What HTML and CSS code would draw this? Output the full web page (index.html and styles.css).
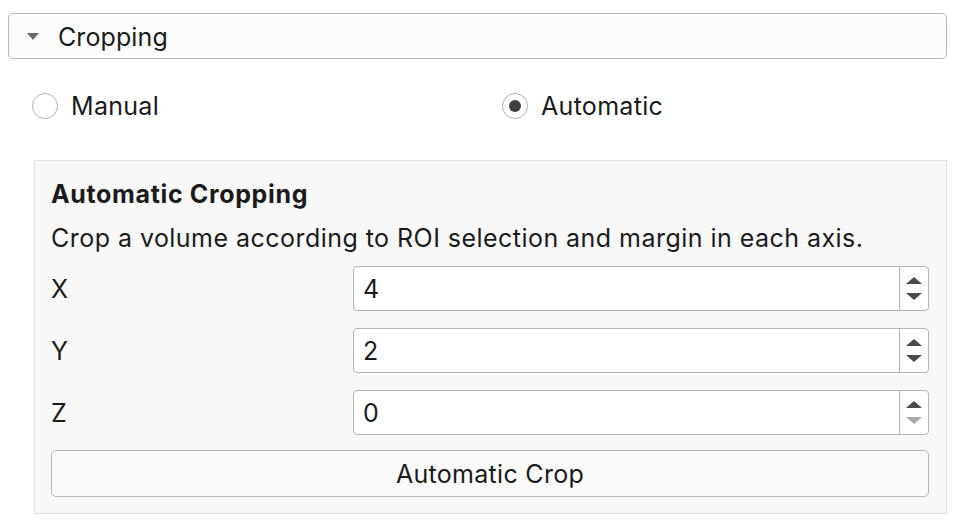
FILE: index.html
```html
<!DOCTYPE html>
<html>
<head>
<meta charset="utf-8">
<link rel="stylesheet" href="styles.css">
</head>
<body>
<div class="panel">
  <div class="header">
    <svg class="caret" width="12" height="7" viewBox="0 0 12 7"><path d="M0 0H12L6 7Z" fill="#6b6b6b"/></svg>
    <span>Cropping</span>
  </div>
  <div class="modes">
    <label class="radio"><span class="circle"></span><span>Manual</span></label>
    <label class="radio"><span class="circle on"></span><span>Automatic</span></label>
  </div>
  <div class="group">
    <div class="title">Automatic Cropping</div>
    <div class="desc">Crop a volume according to ROI selection and margin in each axis.</div>
    <div class="rows">
      <div class="lbl">X</div>
      <div class="spin"><span class="val">4</span><span class="arrows"><i class="up"></i><i class="down"></i></span></div>
      <div class="lbl">Y</div>
      <div class="spin"><span class="val">2</span><span class="arrows"><i class="up"></i><i class="down"></i></span></div>
      <div class="lbl">Z</div>
      <div class="spin"><span class="val">0</span><span class="arrows"><i class="up"></i><i class="down off"></i></span></div>
    </div>
    <div class="btn">Automatic Crop</div>
  </div>
</div>
</body>
</html>
```
FILE: styles.css
```css
html, body {
  margin: 0;
  background: #ffffff;
}
body {
  font-family: Inter, "Liberation Sans", Arial, sans-serif;
  font-size: 25px;
  letter-spacing: 0.3px;
  color: #1b1b1b;
}
.panel {
  padding: 13px 13px 0 8px;
}
.header {
  height: 44px;
  border: 1px solid #b7b7b7;
  border-radius: 5px;
  background: #fcfcfc;
  display: flex;
  align-items: center;
  padding-left: 18px;
  gap: 19px;
}
.header span {
  margin-top: 1px;
  letter-spacing: 0.1px;
}
.caret {
  margin-top: 1px;
}
.modes {
  display: grid;
  grid-template-columns: 470px 1fr;
  padding-left: 24px;
  height: 56px;
  align-items: center;
  margin-top: 19px;
}
.radio {
  display: flex;
  align-items: center;
  gap: 13px;
}
.circle {
  width: 24px;
  height: 24px;
  border: 1.5px solid #b3b3b3;
  border-radius: 50%;
  background: #fff;
  display: flex;
  align-items: center;
  justify-content: center;
}
.circle.on::after {
  content: "";
  width: 12px;
  height: 12px;
  border-radius: 50%;
  background: #3f3f3f;
}
.group {
  margin: 26px 0 0 26px;
  border: 1px solid #e2e2e2;
  background: #f8f8f8;
  padding: 17px 17px 16px 16px;
  height: 319px;
}
.title {
  font-weight: bold;
  letter-spacing: 0.65px;
  line-height: 32px;
}
.desc {
  line-height: 30px;
  margin-top: 13px;
  letter-spacing: 0.46px;
}
.rows {
  display: grid;
  grid-template-columns: 302px 1fr;
  row-gap: 17px;
  margin-top: 13px;
  align-items: center;
}
.spin {
  height: 43px;
  border: 1px solid #b4b4b4;
  border-radius: 4px;
  background: #ffffff;
  display: flex;
  align-items: center;
}
.val {
  flex: 1;
  padding-left: 9px;
}
.arrows {
  width: 28px;
  height: 100%;
  border-left: 1px solid #b4b4b4;
  display: flex;
  flex-direction: column;
  align-items: center;
  justify-content: center;
  gap: 9px;
}
.arrows i {
  width: 0;
  height: 0;
  border-left: 8px solid transparent;
  border-right: 8px solid transparent;
}
.arrows .up {
  border-bottom: 7px solid #4a4a4a;
}
.arrows .down {
  border-top: 7px solid #4a4a4a;
}
.arrows .down.off {
  border-top-color: #a8a8a8;
}
.btn {
  margin-top: 15px;
  height: 45px;
  border: 1px solid #b4b4b4;
  border-radius: 5px;
  background: #fafafa;
  display: flex;
  align-items: center;
  justify-content: center;
}
```
